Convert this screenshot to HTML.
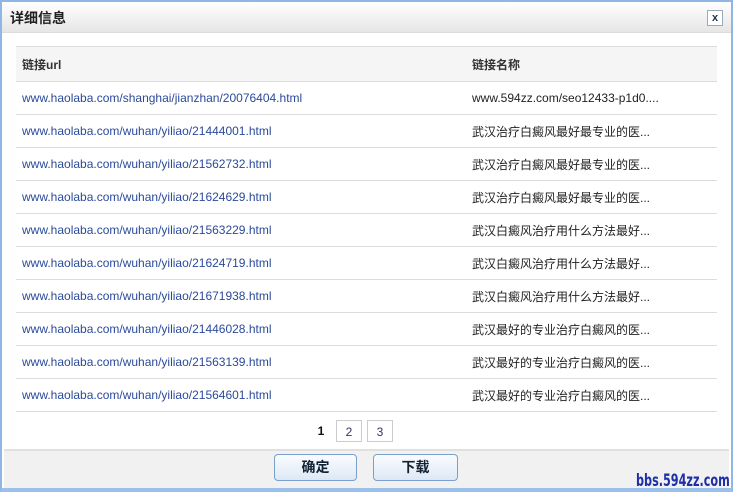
<!DOCTYPE html>
<html><head><meta charset="utf-8"><style>
*{margin:0;padding:0;box-sizing:border-box}
body{width:733px;height:492px;overflow:hidden;background:#fff;font-family:"Liberation Sans","Noto Sans CJK SC",sans-serif;font-size:12px;position:relative}
.frame{position:absolute;left:0;top:0;width:733px;height:492px;border:2px solid #8fb6e4;border-bottom:4px solid #9cc0ec;background:#fff}
.title{position:absolute;left:0;top:0;width:729px;height:31px;background:linear-gradient(#ffffff,#e6e6e6);border-bottom:1px solid #dcdcdc}
.title span{position:absolute;left:8px;top:6px;font-size:14px;font-weight:bold;color:#222}
.close{position:absolute;right:8px;top:8px;width:16px;height:16px;border:1px solid #9ab;background:#fff;font-size:11px;font-weight:bold;color:#235;text-align:center;line-height:14px}
table{position:absolute;left:14px;top:44px;width:701px;border-collapse:collapse}
td,th{height:33px;border-bottom:1px solid #dcdcdc;text-align:left;padding-left:6px;font-weight:normal}
th{background:#f5f5f5;font-weight:bold;color:#333;border-top:1px solid #dcdcdc;height:35px}
td.u{color:#2a4a9a;width:450px}
td.n{color:#222}
.pg{position:absolute;top:420px;left:308px;font-size:12px}
.pg span{position:absolute;top:0;width:26px;height:22px;text-align:center;line-height:22px;color:#336}
.pg .b{border:1px solid #ccc}
.foot{position:absolute;left:4px;top:449px;width:725px;height:39px;background:#f1f1f1;border-top:2px solid #e0e0e0}
.btn{position:absolute;top:454px;height:27px;border:1px solid #7a9fcc;border-radius:4px;background:linear-gradient(#fafcff,#dde8f5);font-weight:bold;font-size:14px;color:#123;text-align:center;line-height:25px}
.wm{position:absolute;left:636px;top:471px;white-space:nowrap;font-family:"DejaVu Sans",sans-serif;font-weight:bold;font-size:17px;color:#1e2fa8;transform:scaleX(0.66);transform-origin:left top}
</style></head><body>
<div class="frame">
<div class="title"><span>详细信息</span><div class="close">x</div></div>
<table>
<tr><th>链接url</th><th>链接名称</th></tr>
<tr><td class="u">www.haolaba.com/shanghai/jianzhan/20076404.html</td><td class="n">www.594zz.com/seo12433-p1d0....</td></tr>
<tr><td class="u">www.haolaba.com/wuhan/yiliao/21444001.html</td><td class="n">武汉治疗白癜风最好最专业的医...</td></tr>
<tr><td class="u">www.haolaba.com/wuhan/yiliao/21562732.html</td><td class="n">武汉治疗白癜风最好最专业的医...</td></tr>
<tr><td class="u">www.haolaba.com/wuhan/yiliao/21624629.html</td><td class="n">武汉治疗白癜风最好最专业的医...</td></tr>
<tr><td class="u">www.haolaba.com/wuhan/yiliao/21563229.html</td><td class="n">武汉白癜风治疗用什么方法最好...</td></tr>
<tr><td class="u">www.haolaba.com/wuhan/yiliao/21624719.html</td><td class="n">武汉白癜风治疗用什么方法最好...</td></tr>
<tr><td class="u">www.haolaba.com/wuhan/yiliao/21671938.html</td><td class="n">武汉白癜风治疗用什么方法最好...</td></tr>
<tr><td class="u">www.haolaba.com/wuhan/yiliao/21446028.html</td><td class="n">武汉最好的专业治疗白癜风的医...</td></tr>
<tr><td class="u">www.haolaba.com/wuhan/yiliao/21563139.html</td><td class="n">武汉最好的专业治疗白癜风的医...</td></tr>
<tr><td class="u">www.haolaba.com/wuhan/yiliao/21564601.html</td><td class="n">武汉最好的专业治疗白癜风的医...</td></tr>
</table>
</div>
<div class="pg"><span style="left:0;font-weight:bold;color:#111">1</span><span class="b" style="left:28px">2</span><span class="b" style="left:59px">3</span></div>
<div class="foot"></div>
<div class="btn" style="left:274px;width:83px">确定</div>
<div class="btn" style="left:373px;width:85px">下载</div>
<div class="wm">bbs.594zz.com</div>
</body></html>
